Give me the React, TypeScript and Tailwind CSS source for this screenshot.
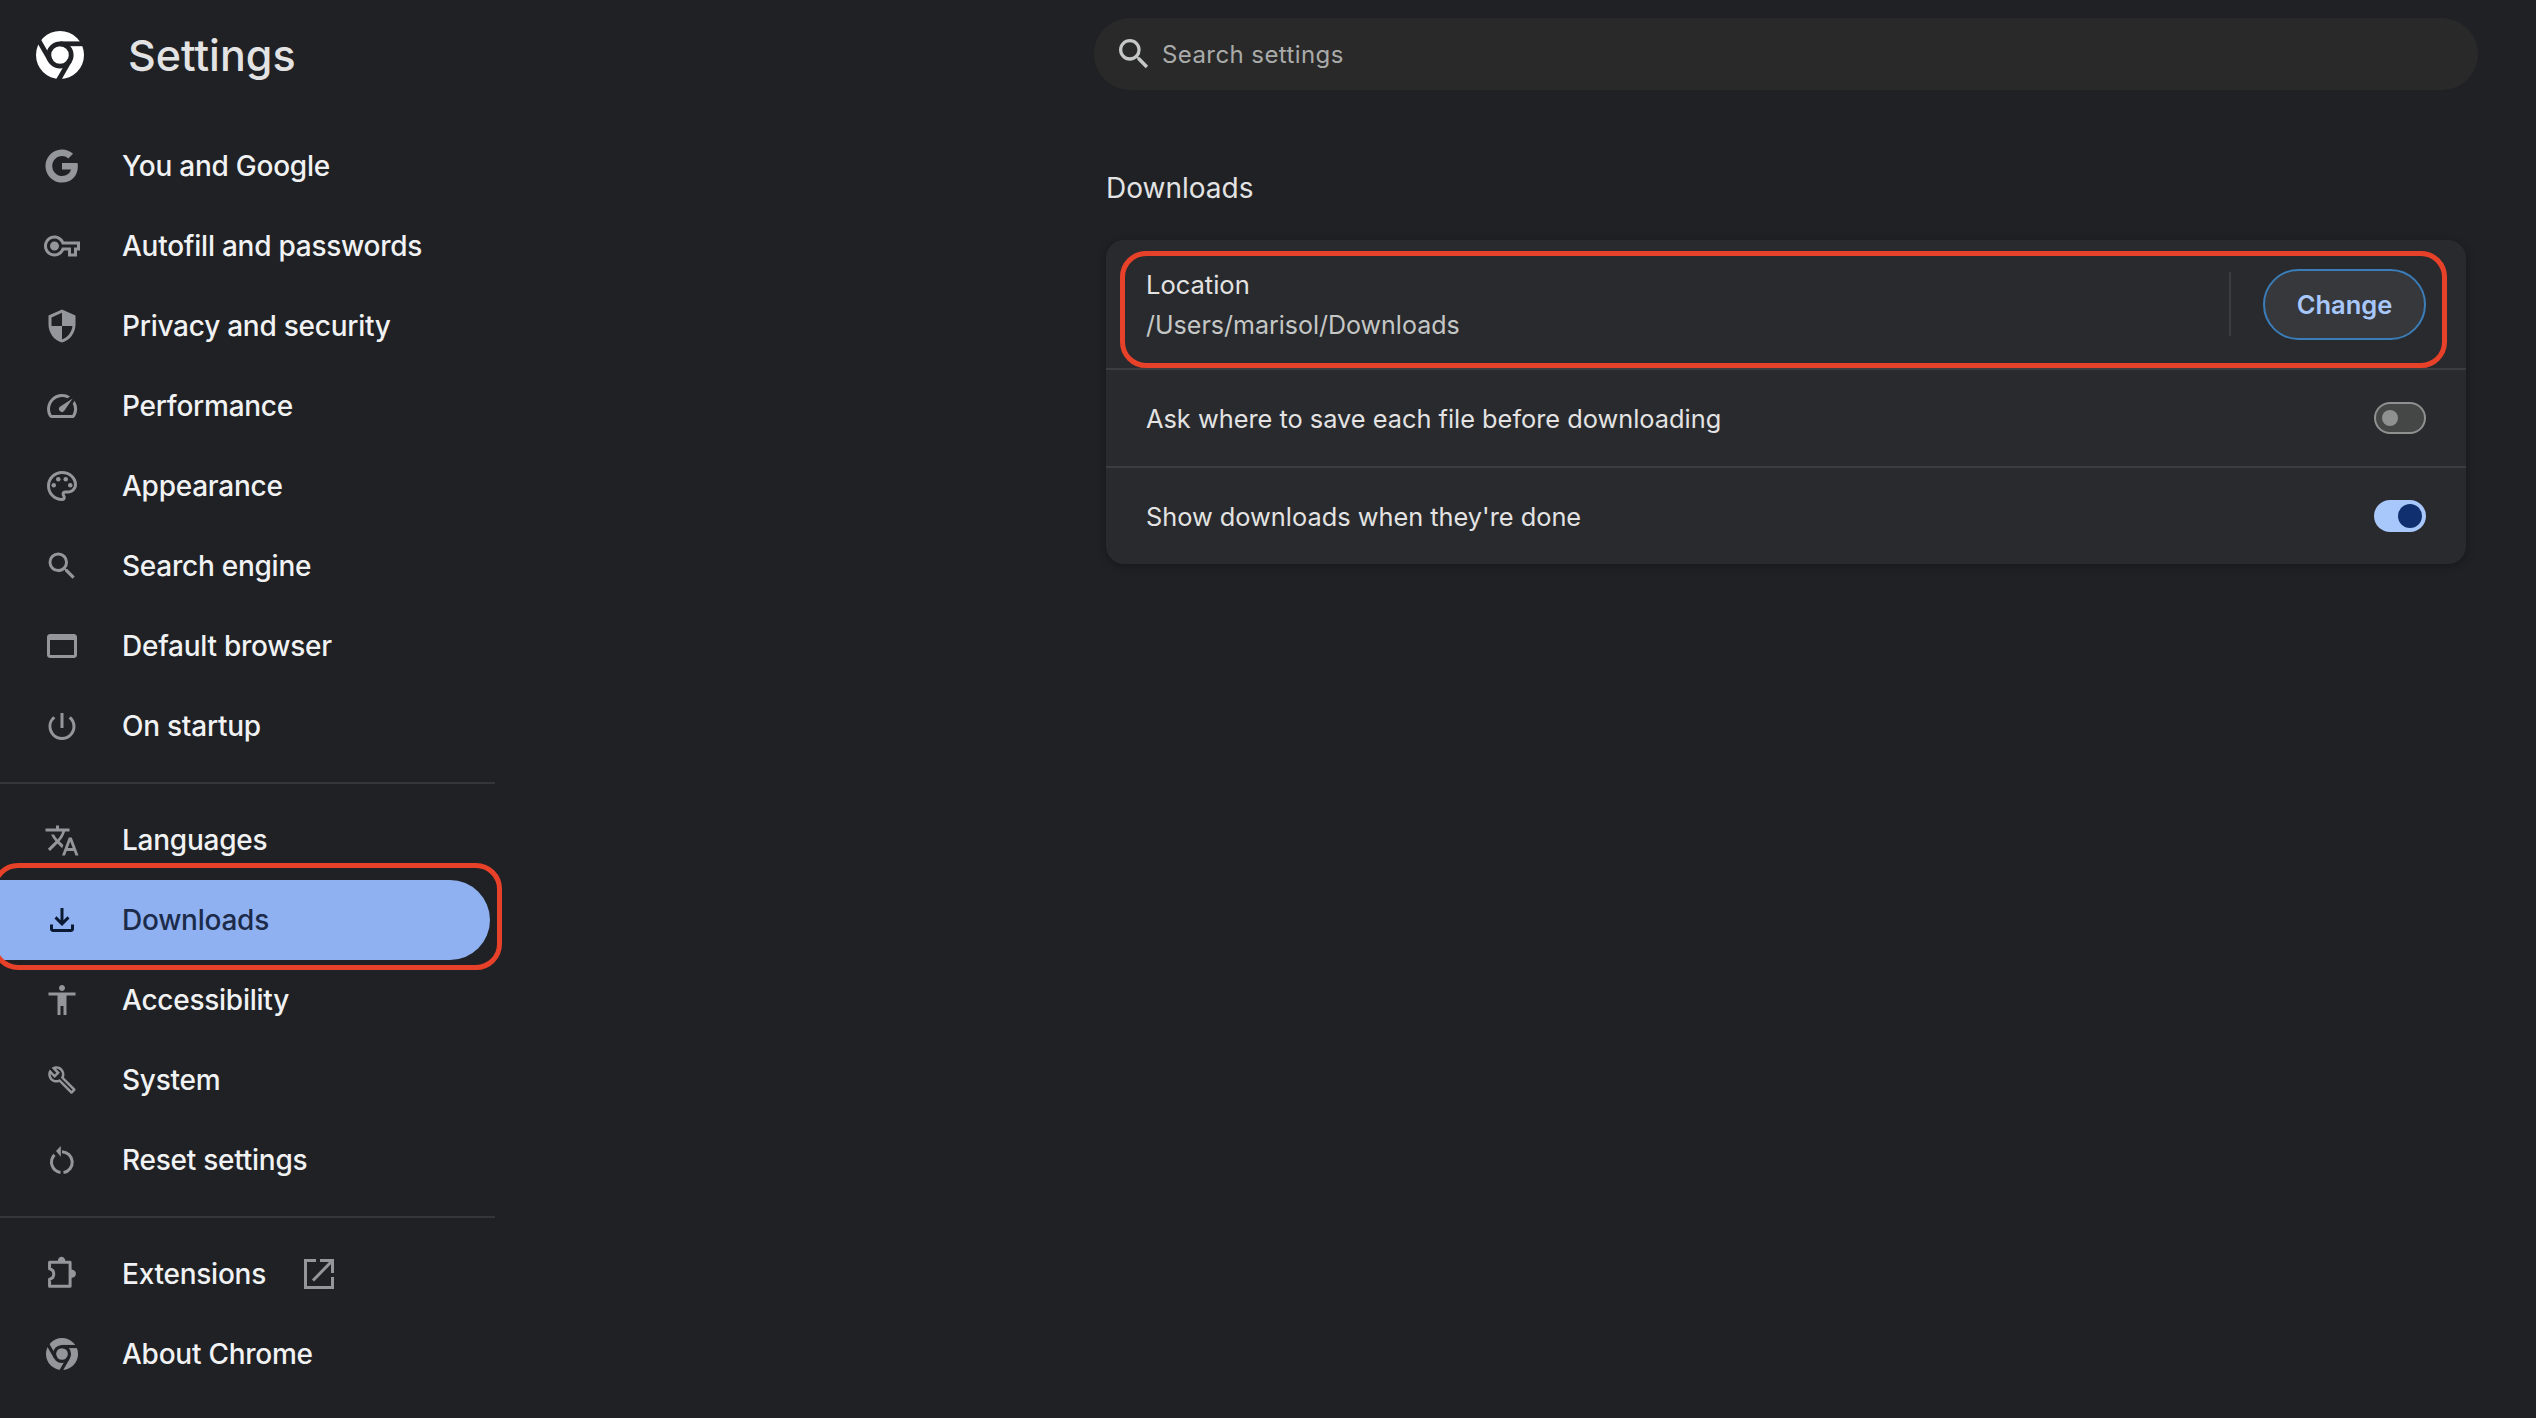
import React from "react";

type IconProps = { d?: string | string[]; size?: number; cls?: string; extra?: React.ReactNode };
function Icon({ d = [], size = 36, cls = "text-[#93969b]", extra }: IconProps) {
  const ds = Array.isArray(d) ? d : [d];
  return (
    <svg viewBox="0 0 24 24" width={size} height={size} fill="currentColor" className={cls}>
      {ds.map((p, i) => (
        <path key={i} d={p} />
      ))}
      {extra}
    </svg>
  );
}

function ChromeLogo({ size, cls }: { size: number; cls: string }) {
  return (
    <svg viewBox="0 0 24 24" width={size} height={size} className={cls}>
      <circle cx="12" cy="12" r="12" fill="currentColor" />
      <circle cx="12" cy="12" r="5.6" fill="none" stroke="#202125" strokeWidth="2.4" />
      <path d="M12 6.4H24" stroke="#202125" strokeWidth="2.4" fill="none" />
      <path d="M12 6.4H24" stroke="#202125" strokeWidth="2.4" fill="none" transform="rotate(120 12 12)" />
      <path d="M12 6.4H24" stroke="#202125" strokeWidth="2.4" fill="none" transform="rotate(240 12 12)" />
    </svg>
  );
}

const GOOGLE = [
  "M22.56 12.25c0-.78-.07-1.53-.2-2.25H12v4.26h5.92c-.26 1.37-1.04 2.53-2.21 3.31v2.77h3.57c2.08-1.92 3.28-4.74 3.28-8.09z",
  "M12 23c2.97 0 5.46-.98 7.28-2.66l-3.57-2.77c-.98.66-2.23 1.06-3.71 1.06-2.86 0-5.29-1.93-6.16-4.53H2.18v2.84C3.99 20.53 7.7 23 12 23z",
  "M5.84 14.09c-.22-.66-.35-1.36-.35-2.09s.13-1.43.35-2.09V7.07H2.18C1.43 8.55 1 10.22 1 12s.43 3.45 1.18 4.93l2.85-2.22.81-.62z",
  "M12 5.38c1.62 0 3.06.56 4.21 1.64l3.15-3.15C17.45 2.09 14.97 1 12 1 7.7 1 3.99 3.47 2.18 7.07l3.66 2.84c.87-2.6 3.3-4.53 6.16-4.53z",
];
const KEY =
  "M22 19h-6v-4h-2.68c-1.14 2.42-3.6 4-6.32 4-3.86 0-7-3.14-7-7s3.14-7 7-7c2.72 0 5.17 1.58 6.32 4H24v6h-2v4zm-4-2h2v-4h2v-2H11.94l-.23-.67C11.01 8.34 9.11 7 7 7c-2.76 0-5 2.24-5 5s2.24 5 5 5c2.11 0 4.01-1.34 4.71-3.33l.23-.67H18v4zM7 15c-1.65 0-3-1.35-3-3s1.35-3 3-3 3 1.35 3 3-1.35 3-3 3z";
const SHIELD =
  "M12 1L3 5v6c0 5.55 3.84 10.74 9 12 5.16-1.26 9-6.45 9-12V5l-9-4zm0 10.99h7c-.53 4.12-3.28 7.79-7 8.94V12H5V6.3l7-3.11v8.8z";
const SPEED =
  "M20.38 8.57l-1.23 1.85a8 8 0 0 1-.22 7.58H5.07A8 8 0 0 1 15.58 6.85l1.85-1.23A10 10 0 0 0 3.35 19a2 2 0 0 0 1.72 1h13.85a2 2 0 0 0 1.74-1 10 10 0 0 0-.27-10.44zm-9.79 6.84a2 2 0 0 0 2.83 0l5.66-8.49-8.49 5.66a2 2 0 0 0 0 2.83z";
const PALETTE =
  "M12 22C6.49 22 2 17.51 2 12S6.49 2 12 2s10 4.04 10 9c0 3.31-2.69 6-6 6h-1.77c-.28 0-.5.22-.5.5 0 .12.05.23.13.33.41.47.64 1.06.64 1.67A2.5 2.5 0 0 1 12 22zm0-18c-4.41 0-8 3.59-8 8s3.59 8 8 8c.28 0 .5-.22.5-.5a.54.54 0 0 0-.14-.35c-.41-.46-.63-1.05-.63-1.65a2.5 2.5 0 0 1 2.5-2.5H16c2.21 0 4-1.79 4-4 0-3.86-3.59-7-8-7z";
const SEARCH =
  "M15.5 14h-.79l-.28-.27A6.471 6.471 0 0 0 16 9.5 6.5 6.5 0 1 0 9.5 16c1.61 0 3.09-.59 4.23-1.57l.27.28v.79l5 4.99L20.49 19l-4.99-5zm-6 0C7.01 14 5 11.99 5 9.5S7.01 5 9.5 5 14 7.01 14 9.5 11.99 14 9.5 14z";
const WEB = "M20 4H4c-1.1 0-2 .9-2 2v12c0 1.1.9 2 2 2h16c1.1 0 2-.9 2-2V6c0-1.1-.9-2-2-2zm0 14H4V8h16v10z";
const POWER =
  "M13 3h-2v10h2V3zm4.83 2.17l-1.42 1.42A6.92 6.92 0 0 1 19 12c0 3.87-3.13 7-7 7A6.995 6.995 0 0 1 7.58 6.58L6.17 5.17A8.932 8.932 0 0 0 3 12c0 4.97 4.03 9 9 9s9-4.03 9-9c0-2.74-1.23-5.18-3.17-6.83z";
const TRANSLATE =
  "M12.87 15.07l-2.54-2.51.03-.03c1.74-1.94 2.98-4.17 3.71-6.53H17V4h-7V2H8v2H1v1.99h11.17C11.5 7.92 10.44 9.75 9 11.35 8.07 10.32 7.3 9.19 6.69 8h-2c.73 1.63 1.73 3.17 2.98 4.56l-5.09 5.02L4 19l5-5 3.11 3.11.76-2.04zM18.5 10h-2L12 22h2l1.12-3h4.75L21 22h2l-4.5-12zm-2.62 7l1.62-4.33L19.12 17h-3.24z";
const DOWNLOAD =
  "M12 16l-5-5 1.4-1.45 2.6 2.6V4h2v8.15l2.6-2.6L17 11l-5 5zm-6 4c-.55 0-1.02-.2-1.41-.59C4.2 19.02 4 18.55 4 18v-3h2v3h12v-3h2v3c0 .55-.2 1.02-.59 1.41-.39.39-.86.59-1.41.59H6z";
const ACCESS =
  "M12 2c1.1 0 2 .9 2 2s-.9 2-2 2-2-.9-2-2 .9-2 2-2zm9 7h-6v13h-2v-6h-2v6H9V9H3V7h18v2z";
const BUILD =
  "M22.61 18.99l-9.08-9.08c.93-2.34.45-5.1-1.44-7C9.79.61 6.21.4 3.66 2.26L7.5 6.11 6.08 7.52 2.25 3.69C.39 6.23.6 9.82 2.9 12.11c1.86 1.86 4.57 2.35 6.89 1.48l9.11 9.11c.39.39 1.02.39 1.41 0l2.3-2.3c.4-.38.4-1.01 0-1.41zm-3 1.6l-9.46-9.46c-.61.45-1.29.72-2 .82-1.36.2-2.79-.21-3.83-1.25C3.37 9.76 2.93 8.5 3 7.26l3.09 3.09 4.24-4.24-3.09-3.09c1.24-.07 2.49.37 3.44 1.31a4.469 4.469 0 0 1 1.24 3.96 4.35 4.35 0 0 1-.88 1.96l9.45 9.45-.88.89z";

const paletteDots = (
  <>
    <circle cx="6.5" cy="11.5" r="1.5" />
    <circle cx="9.5" cy="7.5" r="1.5" />
    <circle cx="14.5" cy="7.5" r="1.5" />
    <circle cx="17.5" cy="11.5" r="1.5" />
  </>
);

const resetExtra = (
  <>
    <path d="M12 6.5A7 7 0 0 1 13 20.4" fill="none" stroke="currentColor" strokeWidth="2" />
    <path d="M11 20.4A7 7 0 0 1 7 8.6" fill="none" stroke="currentColor" strokeWidth="2" />
    <path d="M8 6L11.2 2.6V9.8Z" />
  </>
);

const extensionExtra = (
  <>
    <path
      d="M3.7 4.1H17.4V20.1H3.7V15.5C5.8 15 6.5 13.5 6.5 12C6.5 10.5 5.8 9 3.7 8.5Z"
      fill="none"
      stroke="currentColor"
      strokeWidth="2"
      strokeLinejoin="round"
    />
    <path d="M9.2 3.4C9.2 1.6 10.4 .5 11.7 .5S14.2 1.6 14.2 3.4Z" />
    <path d="M18 9C20 9 21.3 10.3 21.3 11.8S20 14.6 18 14.6Z" />
  </>
);

function Row({ icon, label, children }: { icon: React.ReactNode; label: string; children?: React.ReactNode }) {
  return (
    <div className="h-20 flex items-center">
      <div className="w-[122px] pl-11 shrink-0 flex items-center">
        <div className="w-9 h-9 flex items-center justify-center">{icon}</div>
      </div>
      <span className="text-[28px] tracking-[-0.25px] font-medium text-[#f1f2f3]">{label}</span>
      {children}
    </div>
  );
}

function Toggle({ on }: { on: boolean }) {
  return on ? (
    <div className="w-[52px] h-8 rounded-full bg-[#a8c7fa] flex items-center justify-end pr-1">
      <div className="w-6 h-6 rounded-full bg-[#0f2f6e]" />
    </div>
  ) : (
    <div className="w-[52px] h-8 rounded-full bg-[#444746] border-2 border-[#8e918f] flex items-center pl-1.5">
      <div className="w-4 h-4 rounded-full bg-[#8e918f]" />
    </div>
  );
}

export default function App() {
  return (
    <div className="w-[2536px] h-[1418px] overflow-hidden bg-[#202125] flex font-[Inter,sans-serif]">
      <aside className="w-[495px] shrink-0">
        <header className="h-[126px] pb-4 flex items-center">
          <div className="ml-9 w-12 h-12 flex">
            <ChromeLogo size={48} cls="text-white" />
          </div>
          <h1 className="ml-[44px] text-[43px] font-medium text-[#e3e3e3]">Settings</h1>
        </header>
        <nav>
          <Row icon={<Icon d={GOOGLE} />} label="You and Google" />
          <Row icon={<Icon d={KEY} />} label="Autofill and passwords" />
          <Row icon={<Icon d={SHIELD} />} label="Privacy and security" />
          <Row icon={<Icon d={SPEED} />} label="Performance" />
          <Row icon={<Icon d={PALETTE} extra={paletteDots} />} label="Appearance" />
          <Row icon={<Icon d={SEARCH} size={38} />} label="Search engine" />
          <Row icon={<Icon d={WEB} />} label="Default browser" />
          <Row icon={<Icon d={POWER} size={37} />} label="On startup" />
          <div className="h-0.5 mt-4 mb-4 bg-[#35363a]" />
          <Row icon={<Icon d={TRANSLATE} size={39} />} label="Languages" />
          <div className="relative h-20 w-[490px] rounded-r-full bg-[#8fb1f1] flex items-center">
            <div className="w-[122px] pl-11 shrink-0">
              <div className="w-9 h-9 flex items-center justify-center">
                <Icon d={DOWNLOAD} cls="text-[#0b1a33]" />
              </div>
            </div>
            <span className="text-[28px] tracking-[-0.25px] font-medium text-[#1c2b4a]">Downloads</span>
            <div className="absolute -left-2 -right-3 -top-[17px] -bottom-[10px] border-[5px] border-[#e8412a] rounded-[26px]" />
          </div>
          <Row icon={<Icon d={ACCESS} />} label="Accessibility" />
          <Row icon={<Icon d={BUILD} size={30} />} label="System" />
          <Row icon={<Icon extra={resetExtra} />} label="Reset settings" />
          <div className="h-0.5 mt-4 mb-4 bg-[#35363a]" />
          <Row icon={<Icon extra={extensionExtra} />} label="Extensions">
            <svg viewBox="0 0 30 30" width={30} height={30} fill="none" stroke="currentColor" strokeWidth="3" className="ml-[38px] text-[#93969b]">
              <path d="M12 1.5H1.5V28.5H28.5V18" />
              <path d="M9 21.5L27.5 2.5" />
              <path d="M16 1.5H28.5V14" />
            </svg>
          </Row>
          <Row icon={<ChromeLogo size={32} cls="text-[#93969b]" />} label="About Chrome" />
        </nav>
      </aside>

      <main className="ml-[599px] w-[1384px] shrink-0 pt-[18px]">
        <div className="h-[72px] rounded-full bg-[#292929] flex items-center pl-[20px]">
          <Icon d={SEARCH} cls="text-[#c4c7c5]" size={40} />
          <span className="ml-2 pt-0.5 text-[24px] tracking-[0.42px] text-[#a9abaa]">Search settings</span>
        </div>
        <div className="ml-3 w-[1360px]">
          <h2 className="mt-[78px] h-[40px] leading-[40px] text-[28px] text-[#e3e3e3]">Downloads</h2>
          <div className="mt-[32px] rounded-[18px] bg-[#292a2d] shadow-[0_2px_8px_rgba(0,0,0,0.3)]">
            <div className="relative h-[128px] pl-10 pr-10 flex items-center">
              <div className="flex-1 pt-0.5">
                <div className="text-[25.5px] leading-[40px] text-[#e3e3e3]">Location</div>
                <div className="text-[25px] leading-[40px] text-[#c4c7c5]">/Users/marisol/Downloads</div>
              </div>
              <div className="w-0.5 h-16 bg-[#3c3d40] mr-[32px]" />
              <button className="w-[163px] h-[71px] pt-0.5 rounded-full bg-[#37383b] border-2 border-[#3a7db8] text-[25.5px] font-semibold text-[#a8c7fa]">
                Change
              </button>
              <div className="absolute left-[14px] right-[19px] top-[11px] bottom-0 border-[5px] border-[#e8412a] rounded-[26px]" />
            </div>
            <div className="h-[98px] border-t-2 border-[#3c3d40] pl-10 pr-10 flex items-center justify-between">
              <span className="pt-0.5 text-[25.35px] text-[#e3e3e3]">Ask where to save each file before downloading</span>
              <Toggle on={false} />
            </div>
            <div className="h-[98px] border-t-2 border-[#3c3d40] pl-10 pr-10 flex items-center justify-between">
              <span className="pt-0.5 text-[25.35px] text-[#e3e3e3]">Show downloads when they're done</span>
              <Toggle on={true} />
            </div>
          </div>
        </div>
      </main>
    </div>
  );
}
